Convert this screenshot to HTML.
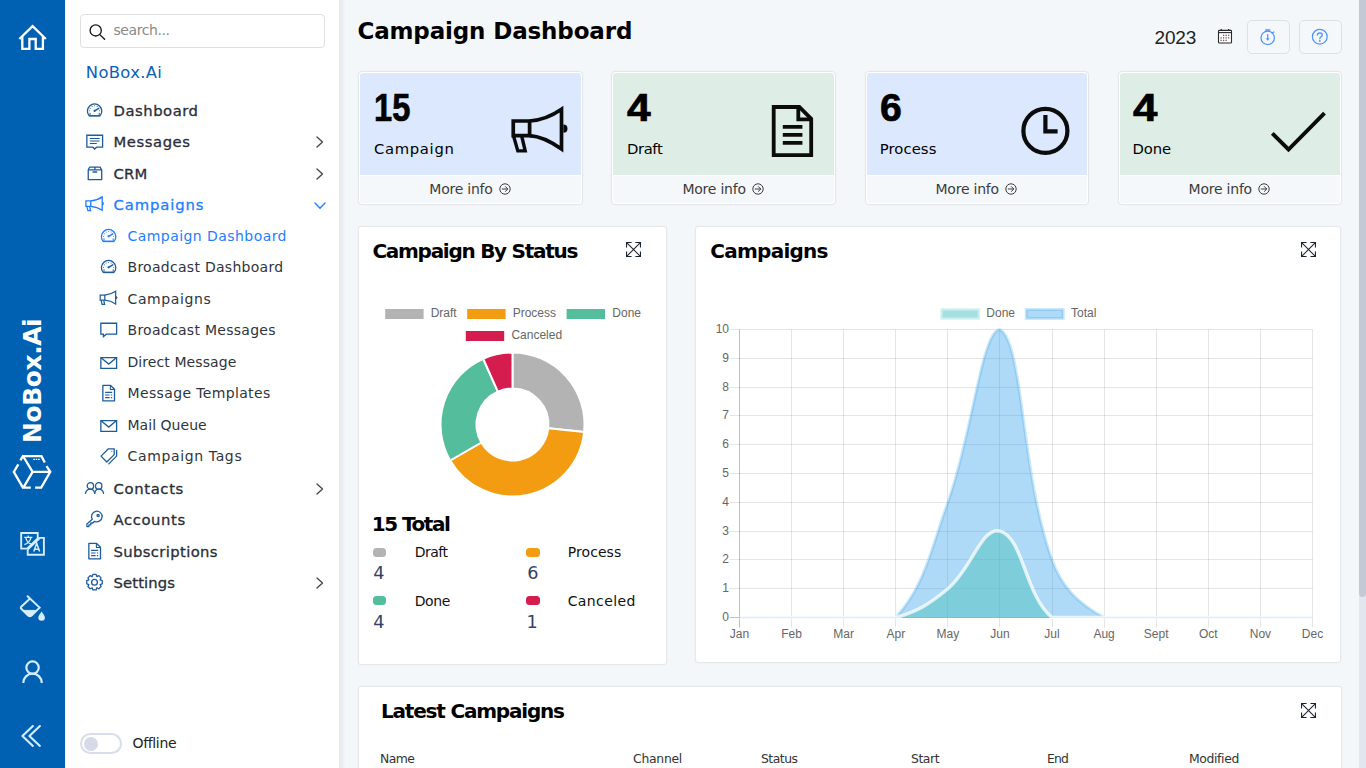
<!DOCTYPE html>
<html lang="en"><head><meta charset="utf-8"><title>Campaign Dashboard</title>
<style>
*{box-sizing:border-box;margin:0;padding:0}
html,body{width:1366px;height:768px;overflow:hidden}
body{position:relative;background:#f4f7fa;font-family:"DejaVu Sans","Liberation Sans",sans-serif;color:#333}
.t{position:absolute;white-space:nowrap;display:block}
.abs{position:absolute}
.rail{position:absolute;left:0;top:0;width:65px;height:768px;background:#0061b2}
.side{position:absolute;left:65px;top:0;width:274px;height:768px;background:#fff}
.side-sh{position:absolute;left:339px;top:0;width:7px;height:768px;background:linear-gradient(90deg,#e7e8ea 0,#e7e9ed 1px,#e8ecf1 2px,#edf1f5 4px,#f2f5f8 6px,#f4f7fa 7px)}
.search{position:absolute;left:80px;top:14px;width:245px;height:34px;border:1px solid #e0e0e0;border-radius:4px;background:#fff}
.toggle{position:absolute;left:80px;top:733px;width:42px;height:21px;border:2px solid #d9dcea;border-radius:11px;background:#fff}
.toggle i{position:absolute;left:2px;top:1.5px;width:14px;height:14px;border-radius:50%;background:#d6dae8}
.card{position:absolute;top:71px;width:224.4px;height:134px;border:1px solid #e4e6e9;border-radius:4px;background:#fff;box-shadow:0 0 2px rgba(0,0,0,.04)}
.card b{position:absolute;left:1px;right:1px;top:1px;height:102px;display:block;border-radius:3px 3px 0 0}
.card u{position:absolute;left:1px;right:1px;top:104px;bottom:1px;display:block;background:#f5f8fb;border-radius:0 0 3px 3px}
.btn{position:absolute;top:20px;width:42.5px;height:34px;border:1px solid #dde0e5;border-radius:5px;background:#f5f8fb}
.panel{position:absolute;background:#fff;border:1px solid #e6e8ec;border-radius:3px;box-shadow:0 0 2px rgba(0,0,0,.05)}
.sw{position:absolute;border-radius:3.5px}
.sb-track{position:absolute;left:1359px;top:0;width:7px;height:768px;background:#e2e6ef}
.sb-thumb{position:absolute;left:1359px;top:0;width:7px;height:597px;background:#c3c9d5;border-radius:0 0 4px 4px}
svg{position:absolute;left:0;top:0;overflow:visible}

</style></head>
<body>

<div class="rail"></div>
<div class="side"></div><div class="side-sh"></div>
<div class="search"></div>
<div class="toggle"><i></i></div>

<svg width="66" height="768" viewBox="0 0 66 768">
<text transform="translate(41.2,442.9) rotate(-90)" font-family='"DejaVu Sans","Liberation Sans",sans-serif' font-weight="700" font-size="25" textLength="124.6" lengthAdjust="spacing" fill="#fff">NoBox.Ai</text>
<g fill="none" stroke="#fff" stroke-width="2.3" stroke-linejoin="miter"><path d="M19.4,39 L32.6,26.2 L45.8,39"/><path d="M22.3,36.5 V48.9 H29.4 V39 H35.7 V48.9 H42.9 V36.5"/></g>
<g fill="none" stroke="#fff" stroke-width="2.3" stroke-linejoin="miter" stroke-linecap="butt"><path d="M20.4,460.4 L22.9,456.1 H41.5 L44.8,462.5"/><path d="M46.5,466.1 L50.3,471.9 L41.2,487.6 H35.1"/><path d="M30.8,487.6 H22.9 L13.8,471.9 L18.3,464.3"/><path d="M23.6,457 L32.6,471.9 H50 M32.6,471.9 L23.8,486.8"/><path d="M33.3,459.4 H39.7" stroke-width="1.4" stroke-dasharray="1.6,0.8"/></g>
<g fill="none" stroke="#d6edff" stroke-width="1.9"><path d="M38.6,537.9 H43.9 V554.7 H27.7 V549.6"/><path d="M21.2,533 H37.7 V538.5 L27.1,548.6 H21.2 Z"/><path d="M39.5,538.3 L27.6,549.6" /><path d="M24.2,537.4 H32.4 M28.3,535.6 V537.4 M30.9,537.6 C30.2,541 27.6,543.6 24.4,544.6 M25.8,537.6 C26.6,541 28.9,543.4 31.2,544" stroke-width="1.3"/><path d="M33.8,551.6 L36.7,543.2 L39.6,551.6 M34.7,549.2 H38.7" stroke-width="1.5"/></g>
<g fill="none" stroke="#d6edff" stroke-width="2" stroke-linecap="round" stroke-linejoin="round"><path d="M27.6,596.2 L39.6,607.6"/><path d="M29.3,599.2 L21.5,606.4 Q20.2,607.7 21.5,609 L28.2,615.6 Q29.9,617 31.6,615.6 L39.6,607.6"/><path d="M22.6,610.4 H36.6 L31.4,615.6 Q29.9,616.8 28.4,615.6 Z" fill="#d6edff" stroke-width="1"/><path d="M41.6,611.4 C43.2,613.8 44.9,615.6 44.9,617.4 A3.3,3.3 0 0 1 38.3,617.4 C38.3,615.6 40,613.8 41.6,611.4 Z" fill="#d6edff" stroke="none"/></g>
<g fill="none" stroke="#d6edff" stroke-width="2.2"><circle cx="32.55" cy="667.6" r="6.2"/><path d="M23.3,682.9 A9.25,9.25 0 0 1 41.8,682.9"/></g>
<g fill="none" stroke="#d6edff" stroke-width="2.1" stroke-linecap="round" stroke-linejoin="round"><path d="M32.9,726 L22.4,736 L32.9,745.9"/><path d="M39.9,726 L29.4,736 L39.9,745.9"/></g>
</svg>
<svg width="1366" height="768" viewBox="0 0 1366 768">
<g fill="none" stroke="#111" stroke-width="1.3" stroke-linecap="round"><circle cx="95.7" cy="30.4" r="5.6"/><path d="M99.8,34.6 L104.6,39.2"/></g>
<g fill="none" stroke="#1d5c9b" stroke-width="1.3"><path d="M89.00,115.70 A7.2,7.2 0 1 1 100.20,115.70"/><path d="M88.80,115.85 H100.40" stroke-width="1.6"/><path d="M94.60,110.80 L98.80,108.30" stroke-width="1.4" stroke-linecap="round"/><circle cx="94.6" cy="110.80000000000001" r="1.1" fill="#1d5c9b" stroke="none"/><circle cx="89.60" cy="110.80" r="0.55" fill="#1d5c9b" stroke="none"/><circle cx="90.27" cy="108.30" r="0.55" fill="#1d5c9b" stroke="none"/><circle cx="92.10" cy="106.47" r="0.55" fill="#1d5c9b" stroke="none"/><circle cx="94.60" cy="105.80" r="0.55" fill="#1d5c9b" stroke="none"/><circle cx="97.10" cy="106.47" r="0.55" fill="#1d5c9b" stroke="none"/><circle cx="99.60" cy="110.80" r="0.55" fill="#1d5c9b" stroke="none"/><path d="M90.00,112.80 v2.4 M99.20,112.80 v2.4" stroke-width="1"/></g>
<g transform="translate(86.2,134.6)" fill="none" stroke="#1d5c9b" stroke-width="1.3">
<path d="M0.65,0.65 H16.4 V12.6 H10.3 L8.5,14.4 L6.7,12.6 H0.65 Z" stroke-linejoin="miter"/>
<path d="M3.6,3.9 H13.4 M3.6,6.4 H13.4 M3.6,8.9 H10.6" stroke-width="1.2"/></g>
<g transform="translate(87.6,166.4)" fill="none" stroke="#1d5c9b" stroke-width="1.3" stroke-linejoin="round">
<path d="M0.65,3.4 L2.2,0.65 H12.5 L14.1,3.4 V13.3 H0.65 Z"/><path d="M0.65,3.4 H14.1 M7.35,0.65 V3.4 M4.9,5.6 H9.6" /></g>
<g transform="translate(85.2,196.0) scale(1.0)" fill="none" stroke="#1f7dff" stroke-width="1.3" stroke-linejoin="miter">
<path d="M0.7,4.9 H5.6 V10.3 H0.7 Z"/><path d="M5.6,4.9 C10,4.6 14,3 17,0.9 V14.3 C14,12.2 10,10.6 5.6,10.3"/>
<path d="M1.7,10.3 L2.7,14.6 H5.4 L4.4,10.3"/><path d="M17.2,6.3 a1.3,1.3 0 0 1 0,2.6" fill="#1f7dff" stroke-width="0.8"/></g>
<g fill="none" stroke="#1f7dff" stroke-width="1.3"><path d="M103.00,241.20 A7.2,7.2 0 1 1 114.20,241.20"/><path d="M102.80,241.35 H114.40" stroke-width="1.6"/><path d="M108.60,236.30 L112.80,233.80" stroke-width="1.4" stroke-linecap="round"/><circle cx="108.6" cy="236.3" r="1.1" fill="#1f7dff" stroke="none"/><circle cx="103.60" cy="236.30" r="0.55" fill="#1f7dff" stroke="none"/><circle cx="104.27" cy="233.80" r="0.55" fill="#1f7dff" stroke="none"/><circle cx="106.10" cy="231.97" r="0.55" fill="#1f7dff" stroke="none"/><circle cx="108.60" cy="231.30" r="0.55" fill="#1f7dff" stroke="none"/><circle cx="111.10" cy="231.97" r="0.55" fill="#1f7dff" stroke="none"/><circle cx="113.60" cy="236.30" r="0.55" fill="#1f7dff" stroke="none"/><path d="M104.00,238.30 v2.4 M113.20,238.30 v2.4" stroke-width="1"/></g>
<g fill="none" stroke="#1d5c9b" stroke-width="1.3"><path d="M103.00,272.20 A7.2,7.2 0 1 1 114.20,272.20"/><path d="M102.80,272.35 H114.40" stroke-width="1.6"/><path d="M108.60,267.30 L112.80,264.80" stroke-width="1.4" stroke-linecap="round"/><circle cx="108.6" cy="267.29999999999995" r="1.1" fill="#1d5c9b" stroke="none"/><circle cx="103.60" cy="267.30" r="0.55" fill="#1d5c9b" stroke="none"/><circle cx="104.27" cy="264.80" r="0.55" fill="#1d5c9b" stroke="none"/><circle cx="106.10" cy="262.97" r="0.55" fill="#1d5c9b" stroke="none"/><circle cx="108.60" cy="262.30" r="0.55" fill="#1d5c9b" stroke="none"/><circle cx="111.10" cy="262.97" r="0.55" fill="#1d5c9b" stroke="none"/><circle cx="113.60" cy="267.30" r="0.55" fill="#1d5c9b" stroke="none"/><path d="M104.00,269.30 v2.4 M113.20,269.30 v2.4" stroke-width="1"/></g>
<g transform="translate(99.5,290.4) scale(0.95)" fill="none" stroke="#1d5c9b" stroke-width="1.3" stroke-linejoin="miter">
<path d="M0.7,4.9 H5.6 V10.3 H0.7 Z"/><path d="M5.6,4.9 C10,4.6 14,3 17,0.9 V14.3 C14,12.2 10,10.6 5.6,10.3"/>
<path d="M1.7,10.3 L2.7,14.6 H5.4 L4.4,10.3"/><path d="M17.2,6.3 a1.3,1.3 0 0 1 0,2.6" fill="#1d5c9b" stroke-width="0.8"/></g>
<g transform="translate(100.2,322.59999999999997)" fill="none" stroke="#1d5c9b" stroke-width="1.3" stroke-linejoin="miter">
<path d="M0.65,0.65 H16.4 V11.6 H6.2 L3.2,14 V11.6 H0.65 Z"/></g>
<g transform="translate(100.2,356.9)" fill="none" stroke="#1d5c9b" stroke-width="1.3" stroke-linejoin="miter">
<path d="M0.65,0.65 H16.4 V11.4 H0.65 Z"/><path d="M0.9,0.9 L8.5,7.2 L16.1,0.9"/></g>
<g transform="translate(102.2,384.79999999999995)" fill="none" stroke="#1d5c9b" stroke-width="1.3" stroke-linejoin="round">
<path d="M0.65,0.65 H8.4 L12.3,4.5 V16 H0.65 Z"/><path d="M8.2,0.9 V4.7 H12.1" stroke-width="1.1"/>
<path d="M2.9,7.6 H10 M2.9,10.2 H7.4 M8.6,10.2 H10 M2.9,12.8 H7.4 M8.6,12.8 H10" stroke-width="1.2"/></g>
<g transform="translate(100.2,419.9)" fill="none" stroke="#1d5c9b" stroke-width="1.3" stroke-linejoin="miter">
<path d="M0.65,0.65 H16.4 V11.4 H0.65 Z"/><path d="M0.9,0.9 L8.5,7.2 L16.1,0.9"/></g>
<g transform="translate(100.2,448.09999999999997)" fill="none" stroke="#1d5c9b" stroke-width="1.3" stroke-linejoin="round" stroke-linecap="round">
<path d="M0.8,8 L8.2,0.7 H14 V6.5 L6.6,13.9 Z"/><path d="M16.4,2.2 V8 L8.6,15.8"/><circle cx="11.6" cy="3.2" r="0.6" fill="#1d5c9b" stroke="none"/></g>
<g transform="translate(84.8,482.0)" fill="none" stroke="#1d5c9b" stroke-width="1.3" stroke-linecap="round">
<circle cx="5.6" cy="3.9" r="3.2"/><path d="M0.7,11.4 C1.2,8.6 3.2,7.2 5.6,7.2 C8,7.2 9.4,8.6 9.9,11.4"/>
<circle cx="13.9" cy="3.9" r="3.2"/><path d="M9.9,11.4 C10.3,8.6 11.6,7.2 13.9,7.2 C16.3,7.2 18.3,8.6 18.8,11.4"/></g>
<g transform="translate(86.2,511.0)" fill="none" stroke="#1d5c9b" stroke-width="1.3" stroke-linejoin="round" stroke-linecap="round">
<path d="M6.1,8.3 A5.3,5.3 0 1 1 8.3,10.3 L6.6,12 H4.6 V13.9 H2.7 V15.6 H0.7 V13 Z"/><circle cx="11.9" cy="4.6" r="1.1"/></g>
<g transform="translate(88.2,542.8)" fill="none" stroke="#1d5c9b" stroke-width="1.3" stroke-linejoin="round">
<path d="M0.65,0.65 H8.4 L12.3,4.5 V16 H0.65 Z"/><path d="M8.2,0.9 V4.7 H12.1" stroke-width="1.1"/>
<path d="M2.9,7.6 H10 M2.9,10.2 H7.4 M8.6,10.2 H10 M2.9,12.8 H7.4 M8.6,12.8 H10" stroke-width="1.2"/></g>
<g fill="none" stroke="#1d5c9b" stroke-width="1.3" stroke-linejoin="round"><polygon points="92.93,574.46 96.07,574.46 96.82,576.56 96.85,576.57 98.86,575.62 101.08,577.84 100.13,579.85 100.14,579.88 102.24,580.63 102.24,583.77 100.14,584.52 100.13,584.55 101.08,586.56 98.86,588.78 96.85,587.83 96.82,587.84 96.07,589.94 92.93,589.94 92.18,587.84 92.15,587.83 90.14,588.78 87.92,586.56 88.87,584.55 88.86,584.52 86.76,583.77 86.76,580.63 88.86,579.88 88.87,579.85 87.92,577.84 90.14,575.62 92.15,576.57 92.18,576.56"/><circle cx="94.5" cy="582.1999999999999" r="2.9"/></g>
</svg>
<svg width="8" height="12" viewBox="0 0 8 12" style="left:316px;top:135.9px" fill="none" stroke="#444" stroke-width="1.3" stroke-linecap="round" stroke-linejoin="round"><path d="M1,1 L6.5,6 L1,11"/></svg><svg width="8" height="12" viewBox="0 0 8 12" style="left:316px;top:167.9px" fill="none" stroke="#444" stroke-width="1.3" stroke-linecap="round" stroke-linejoin="round"><path d="M1,1 L6.5,6 L1,11"/></svg><svg width="8" height="12" viewBox="0 0 8 12" style="left:316px;top:482.9px" fill="none" stroke="#444" stroke-width="1.3" stroke-linecap="round" stroke-linejoin="round"><path d="M1,1 L6.5,6 L1,11"/></svg><svg width="8" height="12" viewBox="0 0 8 12" style="left:316px;top:576.9px" fill="none" stroke="#444" stroke-width="1.3" stroke-linecap="round" stroke-linejoin="round"><path d="M1,1 L6.5,6 L1,11"/></svg><svg width="12" height="8" viewBox="0 0 12 8" style="left:314px;top:202px" fill="none" stroke="#1f7dff" stroke-width="1.3" stroke-linecap="round" stroke-linejoin="round"><path d="M1,1 L6,6.3 L11,1"/></svg>
<div class="btn" style="left:1247px"></div><div class="btn" style="left:1299px"></div>
<svg width="1366" height="768" viewBox="0 0 1366 768" fill="none">
<g stroke="#2a2a2e" stroke-width="1.1"><rect x="1218.5" y="30.4" width="13" height="12.6" rx="0.8" fill="#fff"/><path d="M1218.5,32.6 H1231.5" stroke-width="1.1"/><path d="M1221.3,29 V31 M1228.7,29 V31" stroke-width="1.3"/></g>
<rect x="1222.95" y="34.70" width="1.3" height="1.3" fill="#7a5560"/><rect x="1225.50" y="34.70" width="1.3" height="1.3" fill="#7a5560"/><rect x="1228.05" y="34.70" width="1.3" height="1.3" fill="#7a5560"/><rect x="1220.40" y="37.20" width="1.3" height="1.3" fill="#7a5560"/><rect x="1222.95" y="37.20" width="1.3" height="1.3" fill="#7a5560"/><rect x="1225.50" y="37.20" width="1.3" height="1.3" fill="#7a5560"/><rect x="1228.05" y="37.20" width="1.3" height="1.3" fill="#7a5560"/><rect x="1220.40" y="39.70" width="1.3" height="1.3" fill="#7a5560"/><rect x="1222.95" y="39.70" width="1.3" height="1.3" fill="#7a5560"/><rect x="1225.50" y="39.70" width="1.3" height="1.3" fill="#7a5560"/>
<g stroke="#4d94ff" stroke-width="1.25" stroke-linecap="round"><circle cx="1267.7" cy="37.9" r="6.7"/><path d="M1265.8,30 H1269.6" stroke-width="1.5"/><path d="M1272.2,33.1 L1273.8,32"/><path d="M1267.7,34.6 V39.6"/><path d="M1266.5,38.8 L1267.7,40.4 L1268.9,38.8 Z" fill="#4d94ff" stroke-width="0.6"/></g>
<g stroke="#4d94ff" stroke-width="1.25"><circle cx="1319.8" cy="36.7" r="7.4"/><path d="M1317.4,35 C1317.4,32.3 1322.3,32.3 1322.3,35 C1322.3,36.8 1319.8,36.7 1319.8,38.7" stroke-linecap="round" stroke-width="1.35"/><circle cx="1319.8" cy="41" r="0.9" fill="#4d94ff" stroke="none"/></g>
</svg>
<div class="card" style="left:358.3px"><b style="background:#dbe8fd"></b><u></u></div>
<div class="card" style="left:611.4px"><b style="background:#deede5"></b><u></u></div>
<div class="card" style="left:864.5px"><b style="background:#dbe8fd"></b><u></u></div>
<div class="card" style="left:1117.6px"><b style="background:#deede5"></b><u></u></div>

<svg width="1366" height="768" viewBox="0 0 1366 768" fill="none" stroke="#0b0b0b">
<g transform="translate(511.4,106)" stroke-width="3.7" stroke-linejoin="miter"><path d="M1.85,15 H18.2 V29.6 H1.85 Z"/><path d="M18.2,15 C30,14.4 41,9.6 50.1,3.3 V43 C41,36.6 30,30.2 18.2,29.6"/><path d="M2.3,30.5 L6.4,44.9 H13.8 L10.4,30.5" stroke-width="3.4"/><path d="M52,18.6 a4.1,4.1 0 0 1 0,8.2 Z" fill="#0b0b0b" stroke="none"/></g>
<g transform="translate(771.8,105.1)" stroke-width="3.8" stroke-linejoin="miter"><path d="M1.9,1.9 H27.5 L39.4,13.8 V50 H1.9 Z"/><path d="M26.5,2.4 V14.2 H38.8" stroke-width="3.8"/><path d="M11,21.8 H30.6 M11,29.8 H30.6 M11,37.8 H30.6" stroke-width="3.9"/></g>
<g stroke-width="4.2"><circle cx="1045.4" cy="130.9" r="22"/><path d="M1045.4,115 V131.4 H1057.6" stroke-width="4.2"/></g>
<path d="M1272.3,133.3 L1288.5,149.5 L1324.5,113.2" stroke-width="3.9" stroke-linejoin="miter"/>
</svg>
<svg width="12" height="12" viewBox="0 0 12 12" style="left:498.6px;top:183px" fill="none" stroke="#3c3c3c" stroke-width="1"><circle cx="6" cy="6" r="5.2"/><path d="M3.2,6 H8.6 M6.4,3.6 L8.8,6 L6.4,8.4" stroke-linecap="round" stroke-linejoin="round"/></svg><svg width="12" height="12" viewBox="0 0 12 12" style="left:751.6px;top:183px" fill="none" stroke="#3c3c3c" stroke-width="1"><circle cx="6" cy="6" r="5.2"/><path d="M3.2,6 H8.6 M6.4,3.6 L8.8,6 L6.4,8.4" stroke-linecap="round" stroke-linejoin="round"/></svg><svg width="12" height="12" viewBox="0 0 12 12" style="left:1004.6px;top:183px" fill="none" stroke="#3c3c3c" stroke-width="1"><circle cx="6" cy="6" r="5.2"/><path d="M3.2,6 H8.6 M6.4,3.6 L8.8,6 L6.4,8.4" stroke-linecap="round" stroke-linejoin="round"/></svg><svg width="12" height="12" viewBox="0 0 12 12" style="left:1257.6px;top:183px" fill="none" stroke="#3c3c3c" stroke-width="1"><circle cx="6" cy="6" r="5.2"/><path d="M3.2,6 H8.6 M6.4,3.6 L8.8,6 L6.4,8.4" stroke-linecap="round" stroke-linejoin="round"/></svg>
<div class="panel" style="left:358px;top:226px;width:309px;height:439px"></div>
<div class="panel" style="left:695px;top:226px;width:646px;height:437px"></div>
<div class="panel" style="left:358px;top:686px;width:983.5px;height:120px"></div>
<svg width="15" height="15" viewBox="0 0 15 15" style="left:626.4px;top:242px" fill="none" stroke="#1b2230" stroke-width="1.05">
<path d="M0.9,0.9 L14.1,14.1 M14.1,0.9 L0.9,14.1"/><path d="M0.55,5.6 V0.55 H5.6 M9.4,0.55 H14.45 V5.6 M14.45,9.4 V14.45 H9.4 M5.6,14.45 H0.55 V9.4" stroke-width="1.1"/></svg><svg width="15" height="15" viewBox="0 0 15 15" style="left:1301.1px;top:242px" fill="none" stroke="#1b2230" stroke-width="1.05">
<path d="M0.9,0.9 L14.1,14.1 M14.1,0.9 L0.9,14.1"/><path d="M0.55,5.6 V0.55 H5.6 M9.4,0.55 H14.45 V5.6 M14.45,9.4 V14.45 H9.4 M5.6,14.45 H0.55 V9.4" stroke-width="1.1"/></svg><svg width="15" height="15" viewBox="0 0 15 15" style="left:1301.1px;top:703px" fill="none" stroke="#1b2230" stroke-width="1.05">
<path d="M0.9,0.9 L14.1,14.1 M14.1,0.9 L0.9,14.1"/><path d="M0.55,5.6 V0.55 H5.6 M9.4,0.55 H14.45 V5.6 M14.45,9.4 V14.45 H9.4 M5.6,14.45 H0.55 V9.4" stroke-width="1.1"/></svg>
<svg width="1366" height="768" viewBox="0 0 1366 768" font-family='"Liberation Sans",sans-serif' font-size="12" fill="#666">
<path d="M512.50,352.50 A72,72 0 0 1 584.11,432.03 L548.30,428.26 A36,36 0 0 0 512.50,388.50 Z" fill="#b3b3b3" stroke="#fff" stroke-width="2" stroke-linejoin="round"/>
<path d="M584.11,432.03 A72,72 0 0 1 450.15,460.50 L481.32,442.50 A36,36 0 0 0 548.30,428.26 Z" fill="#f39c12" stroke="#fff" stroke-width="2" stroke-linejoin="round"/>
<path d="M450.15,460.50 A72,72 0 0 1 483.21,358.72 L497.86,391.61 A36,36 0 0 0 481.32,442.50 Z" fill="#53bd9c" stroke="#fff" stroke-width="2" stroke-linejoin="round"/>
<path d="M483.21,358.72 A72,72 0 0 1 512.50,352.50 L512.50,388.50 A36,36 0 0 0 497.86,391.61 Z" fill="#d51c4e" stroke="#fff" stroke-width="2" stroke-linejoin="round"/>
<rect x="385.2" y="309" width="38.4" height="10" fill="#b3b3b3"/>
<rect x="467.2" y="309" width="38.4" height="10" fill="#f39c12"/>
<rect x="566.6" y="309" width="38.4" height="10" fill="#53bd9c"/>
<rect x="465.8" y="331" width="38.4" height="10" fill="#d51c4e"/>
<text x="430.7" y="317.2">Draft</text>
<text x="512.7" y="317.2">Process</text>
<text x="612.3" y="317.2">Done</text>
<text x="511.4" y="339.2">Canceled</text>
</svg>
<svg width="1366" height="768" viewBox="0 0 1366 768" font-family='"Liberation Sans",sans-serif' font-size="12" fill="#666">
<path d="M729.5,588.5 H1312.5 M729.5,559.5 H1312.5 M729.5,531.5 H1312.5 M729.5,502.5 H1312.5 M729.5,473.5 H1312.5 M729.5,444.5 H1312.5 M729.5,415.5 H1312.5 M729.5,387.5 H1312.5 M729.5,358.5 H1312.5 M729.5,329.5 H1312.5 M791.5,329.5 V627.5 M843.5,329.5 V627.5 M895.5,329.5 V627.5 M947.5,329.5 V627.5 M999.5,329.5 V627.5 M1052.5,329.5 V627.5 M1104.5,329.5 V627.5 M1156.5,329.5 V627.5 M1208.5,329.5 V627.5 M1260.5,329.5 V627.5 M1312.5,329.5 V627.5" stroke="rgba(0,0,0,0.1)" stroke-width="1" fill="none"/>
<path d="M729.5,617.5 H1312.5 M739.5,329.5 V627.5" stroke="rgba(0,0,0,0.25)" stroke-width="1" fill="none"/>
<path d="M739.50,617.50 C760.34,617.50 770.75,617.50 791.59,617.50 C812.43,617.50 822.85,617.50 843.68,617.50 C864.52,617.50 883.61,617.50 895.77,617.50 C925.29,584.87 930.70,549.76 947.86,502.30 C972.37,434.56 981.91,329.50 999.95,329.50 C1023.58,342.56 1020.68,473.20 1052.05,559.90 C1062.36,588.40 1079.19,603.71 1104.14,617.50 C1120.87,617.50 1135.39,617.50 1156.23,617.50 C1177.06,617.50 1187.48,617.50 1208.32,617.50 C1229.15,617.50 1239.57,617.50 1260.41,617.50 C1281.25,617.50 1291.66,617.50 1312.50,617.50 L1312.5,617.5 L739.5,617.5 Z" fill="rgba(54,162,235,0.4)"/>
<path d="M739.50,617.50 C760.34,617.50 770.75,617.50 791.59,617.50 C812.43,617.50 822.85,617.50 843.68,617.50 C864.52,617.50 883.61,617.50 895.77,617.50 C925.29,584.87 930.70,549.76 947.86,502.30 C972.37,434.56 981.91,329.50 999.95,329.50 C1023.58,342.56 1020.68,473.20 1052.05,559.90 C1062.36,588.40 1079.19,603.71 1104.14,617.50 C1120.87,617.50 1135.39,617.50 1156.23,617.50 C1177.06,617.50 1187.48,617.50 1208.32,617.50 C1229.15,617.50 1239.57,617.50 1260.41,617.50 C1281.25,617.50 1291.66,617.50 1312.50,617.50" fill="none" stroke="rgba(54,162,235,0.25)" stroke-width="3" stroke-linejoin="round"/>
<path d="M739.50,617.50 C760.34,617.50 770.75,617.50 791.59,617.50 C812.43,617.50 822.85,617.50 843.68,617.50 C864.52,617.50 876.32,617.50 895.77,617.50 C918.00,611.36 929.78,603.70 947.86,588.70 C971.46,569.14 981.83,526.09 999.95,531.10 C1023.50,537.61 1024.56,594.71 1052.05,617.50 C1066.24,617.50 1083.30,617.50 1104.14,617.50 C1124.97,617.50 1135.39,617.50 1156.23,617.50 C1177.06,617.50 1187.48,617.50 1208.32,617.50 C1229.15,617.50 1239.57,617.50 1260.41,617.50 C1281.25,617.50 1291.66,617.50 1312.50,617.50 L1312.5,617.5 L739.5,617.5 Z" fill="rgba(75,192,192,0.5)"/>
<path d="M739.50,617.50 C760.34,617.50 770.75,617.50 791.59,617.50 C812.43,617.50 822.85,617.50 843.68,617.50 C864.52,617.50 876.32,617.50 895.77,617.50 C918.00,611.36 929.78,603.70 947.86,588.70 C971.46,569.14 981.83,526.09 999.95,531.10 C1023.50,537.61 1024.56,594.71 1052.05,617.50 C1066.24,617.50 1083.30,617.50 1104.14,617.50 C1124.97,617.50 1135.39,617.50 1156.23,617.50 C1177.06,617.50 1187.48,617.50 1208.32,617.50 C1229.15,617.50 1239.57,617.50 1260.41,617.50 C1281.25,617.50 1291.66,617.50 1312.50,617.50" fill="none" stroke="rgba(255,255,255,0.75)" stroke-width="3.4" stroke-linejoin="round"/>
<text x="729" y="620.9" text-anchor="end">0</text>
<text x="729" y="592.1" text-anchor="end">1</text>
<text x="729" y="563.3" text-anchor="end">2</text>
<text x="729" y="534.5" text-anchor="end">3</text>
<text x="729" y="505.7" text-anchor="end">4</text>
<text x="729" y="476.9" text-anchor="end">5</text>
<text x="729" y="448.1" text-anchor="end">6</text>
<text x="729" y="419.3" text-anchor="end">7</text>
<text x="729" y="390.5" text-anchor="end">8</text>
<text x="729" y="361.7" text-anchor="end">9</text>
<text x="729" y="332.9" text-anchor="end">10</text>
<text x="739.5" y="638" text-anchor="middle">Jan</text>
<text x="791.6" y="638" text-anchor="middle">Feb</text>
<text x="843.7" y="638" text-anchor="middle">Mar</text>
<text x="895.8" y="638" text-anchor="middle">Apr</text>
<text x="947.9" y="638" text-anchor="middle">May</text>
<text x="1000.0" y="638" text-anchor="middle">Jun</text>
<text x="1052.0" y="638" text-anchor="middle">Jul</text>
<text x="1104.1" y="638" text-anchor="middle">Aug</text>
<text x="1156.2" y="638" text-anchor="middle">Sept</text>
<text x="1208.3" y="638" text-anchor="middle">Oct</text>
<text x="1260.4" y="638" text-anchor="middle">Nov</text>
<text x="1312.5" y="638" text-anchor="middle">Dec</text>
<rect x="941.7" y="309.5" width="37" height="9" fill="rgba(75,192,192,0.5)" stroke="rgba(200,236,236,0.6)" stroke-width="3"/>
<text x="986.3" y="317.2">Done</text>
<rect x="1026.2" y="309.5" width="37" height="9" fill="rgba(54,162,235,0.4)" stroke="rgba(54,162,235,0.25)" stroke-width="3"/>
<text x="1071" y="317.2">Total</text>
</svg>
<span class="sw" style="left:373.3px;top:547.6px;width:12.6px;height:9.4px;background:#b3b3b3"></span>
<span class="sw" style="left:526px;top:547.6px;width:14px;height:9.4px;background:#f39c12"></span>
<span class="sw" style="left:373.3px;top:596px;width:12.6px;height:9.4px;background:#53bd9c"></span>
<span class="sw" style="left:526px;top:596px;width:14px;height:9.4px;background:#d51c4e"></span>
<div class="sb-track"></div><div class="sb-thumb"></div>
<nav>
<span class="t" style='left:113.50px;top:21.40px;font-size:14px;line-height:19px;color:#8a8a8a;letter-spacing:-0.420px;'>search...</span>
<span class="t" style='left:85.80px;top:62.10px;font-size:16.4px;line-height:22px;color:#0b60bd;letter-spacing:0.324px;'>NoBox.Ai</span>
<span class="t" style='left:113.50px;top:101.00px;font-size:14.8px;line-height:20px;color:#2a2e38;letter-spacing:0.527px;-webkit-text-stroke:0.3px;'>Dashboard</span>
<span class="t" style='left:113.50px;top:132.00px;font-size:14.8px;line-height:20px;color:#2a2e38;letter-spacing:0.562px;-webkit-text-stroke:0.3px;'>Messages</span>
<span class="t" style='left:113.50px;top:164.00px;font-size:14.8px;line-height:20px;color:#2a2e38;letter-spacing:0.205px;-webkit-text-stroke:0.3px;'>CRM</span>
<span class="t" style='left:113.50px;top:195.00px;font-size:14.8px;line-height:20px;color:#1f7dff;letter-spacing:0.891px;-webkit-text-stroke:0.3px;'>Campaigns</span>
<span class="t" style='left:127.50px;top:227.00px;font-size:14px;line-height:19px;color:#1f7dff;letter-spacing:0.440px;'>Campaign Dashboard</span>
<span class="t" style='left:127.50px;top:258.00px;font-size:14px;line-height:19px;color:#30343c;letter-spacing:0.280px;'>Broadcast Dashboard</span>
<span class="t" style='left:127.50px;top:290.00px;font-size:14px;line-height:19px;color:#30343c;letter-spacing:0.612px;'>Campaigns</span>
<span class="t" style='left:127.50px;top:321.00px;font-size:14px;line-height:19px;color:#30343c;letter-spacing:0.279px;'>Broadcast Messages</span>
<span class="t" style='left:127.50px;top:353.00px;font-size:14px;line-height:19px;color:#30343c;letter-spacing:0.078px;'>Direct Message</span>
<span class="t" style='left:127.50px;top:384.00px;font-size:14px;line-height:19px;color:#30343c;letter-spacing:0.356px;'>Message Templates</span>
<span class="t" style='left:127.50px;top:416.00px;font-size:14px;line-height:19px;color:#30343c;letter-spacing:0.034px;'>Mail Queue</span>
<span class="t" style='left:127.50px;top:447.00px;font-size:14px;line-height:19px;color:#30343c;letter-spacing:0.636px;'>Campaign Tags</span>
<span class="t" style='left:113.50px;top:479.00px;font-size:14.8px;line-height:20px;color:#2a2e38;letter-spacing:0.646px;-webkit-text-stroke:0.3px;'>Contacts</span>
<span class="t" style='left:113.50px;top:510.00px;font-size:14.8px;line-height:20px;color:#2a2e38;letter-spacing:0.607px;-webkit-text-stroke:0.3px;'>Accounts</span>
<span class="t" style='left:113.50px;top:542.00px;font-size:14.8px;line-height:20px;color:#2a2e38;letter-spacing:0.362px;-webkit-text-stroke:0.3px;'>Subscriptions</span>
<span class="t" style='left:113.50px;top:573.00px;font-size:14.8px;line-height:20px;color:#2a2e38;letter-spacing:0.114px;-webkit-text-stroke:0.3px;'>Settings</span>
<span class="t" style='left:132.60px;top:733.80px;font-size:14px;line-height:19px;color:#222;letter-spacing:-0.373px;'>Offline</span>
</nav>
<main>
<span class="t" style='left:357.40px;top:16.20px;font-size:23px;line-height:30px;color:#000;font-weight:700;letter-spacing:-0.139px;'>Campaign Dashboard</span>
<span class="t" style='left:1154.60px;top:24.90px;font-size:19px;line-height:25px;color:#222;font-family:"Liberation Sans",sans-serif;letter-spacing:-0.194px;'>2023</span>
<span class="t" style='left:374.20px;top:82.50px;font-size:38px;line-height:50px;color:#000;font-weight:700;font-family:"Liberation Sans",sans-serif;-webkit-text-stroke:0.7px #000;transform:scaleX(0.8585);transform-origin:0 0;'>15</span>
<span class="t" style='left:373.90px;top:139.20px;font-size:14.8px;line-height:20px;color:#000;letter-spacing:0.692px;'>Campaign</span>
<span class="t" style='left:429.30px;top:179.80px;font-size:14px;line-height:19px;color:#3c3c3c;letter-spacing:-0.228px;'>More info</span>
<span class="t" style='left:627.30px;top:82.50px;font-size:38px;line-height:50px;color:#000;font-weight:700;font-family:"Liberation Sans",sans-serif;-webkit-text-stroke:0.7px #000;transform:scaleX(1.1211);transform-origin:0 0;'>4</span>
<span class="t" style='left:627.00px;top:139.20px;font-size:14.8px;line-height:20px;color:#000;letter-spacing:-0.399px;'>Draft</span>
<span class="t" style='left:682.40px;top:179.80px;font-size:14px;line-height:19px;color:#3c3c3c;letter-spacing:-0.228px;'>More info</span>
<span class="t" style='left:880.00px;top:82.50px;font-size:38px;line-height:50px;color:#000;font-weight:700;font-family:"Liberation Sans",sans-serif;-webkit-text-stroke:0.7px #000;transform:scaleX(1.0312);transform-origin:0 0;'>6</span>
<span class="t" style='left:879.70px;top:139.20px;font-size:14.8px;line-height:20px;color:#000;letter-spacing:0.093px;'>Process</span>
<span class="t" style='left:935.50px;top:179.80px;font-size:14px;line-height:19px;color:#3c3c3c;letter-spacing:-0.228px;'>More info</span>
<span class="t" style='left:1132.80px;top:82.50px;font-size:38px;line-height:50px;color:#000;font-weight:700;font-family:"Liberation Sans",sans-serif;-webkit-text-stroke:0.7px #000;transform:scaleX(1.1542);transform-origin:0 0;'>4</span>
<span class="t" style='left:1132.50px;top:139.20px;font-size:14.8px;line-height:20px;color:#000;letter-spacing:-0.112px;'>Done</span>
<span class="t" style='left:1188.60px;top:179.80px;font-size:14px;line-height:19px;color:#3c3c3c;letter-spacing:-0.228px;'>More info</span>
<span class="t" style='left:372.40px;top:238.00px;font-size:20px;line-height:26px;color:#000;font-weight:700;letter-spacing:-1.271px;'>Campaign By Status</span>
<span class="t" style='left:710.30px;top:238.00px;font-size:20px;line-height:26px;color:#000;font-weight:700;letter-spacing:-0.743px;'>Campaigns</span>
<span class="t" style='left:381.00px;top:698.40px;font-size:20px;line-height:26px;color:#000;font-weight:700;letter-spacing:-1.196px;'>Latest Campaigns</span>
<span class="t" style='left:371.80px;top:510.90px;font-size:20px;line-height:26px;color:#000;font-weight:700;letter-spacing:-1.491px;'>15 Total</span>
<span class="t" style='left:414.70px;top:543.40px;font-size:14px;line-height:19px;color:#111;letter-spacing:-0.499px;'>Draft</span>
<span class="t" style='left:567.70px;top:543.40px;font-size:14px;line-height:19px;color:#111;letter-spacing:0.082px;'>Process</span>
<span class="t" style='left:414.70px;top:592.00px;font-size:14px;line-height:19px;color:#111;letter-spacing:-0.415px;'>Done</span>
<span class="t" style='left:567.70px;top:592.00px;font-size:14px;line-height:19px;color:#111;letter-spacing:0.395px;'>Canceled</span>
<span class="t" style='left:373.30px;top:561.00px;font-size:17.7px;line-height:24px;color:#34416a;'>4</span>
<span class="t" style='left:527.20px;top:561.00px;font-size:17.7px;line-height:24px;color:#34416a;'>6</span>
<span class="t" style='left:373.30px;top:610.00px;font-size:17.7px;line-height:24px;color:#34416a;'>4</span>
<span class="t" style='left:526.40px;top:610.00px;font-size:17.7px;line-height:24px;color:#34416a;'>1</span>
<span class="t" style='left:379.90px;top:750.00px;font-size:12.4px;line-height:17px;color:#333;letter-spacing:-0.521px;'>Name</span>
<span class="t" style='left:633.00px;top:750.00px;font-size:12.4px;line-height:17px;color:#333;letter-spacing:-0.263px;'>Channel</span>
<span class="t" style='left:761.00px;top:750.00px;font-size:12.4px;line-height:17px;color:#333;letter-spacing:-0.497px;'>Status</span>
<span class="t" style='left:911.00px;top:750.00px;font-size:12.4px;line-height:17px;color:#333;letter-spacing:-0.445px;'>Start</span>
<span class="t" style='left:1047.00px;top:750.00px;font-size:12.4px;line-height:17px;color:#333;letter-spacing:-0.881px;'>End</span>
<span class="t" style='left:1189.00px;top:750.00px;font-size:12.4px;line-height:17px;color:#333;letter-spacing:-0.368px;'>Modified</span>
</main>

</body></html>
